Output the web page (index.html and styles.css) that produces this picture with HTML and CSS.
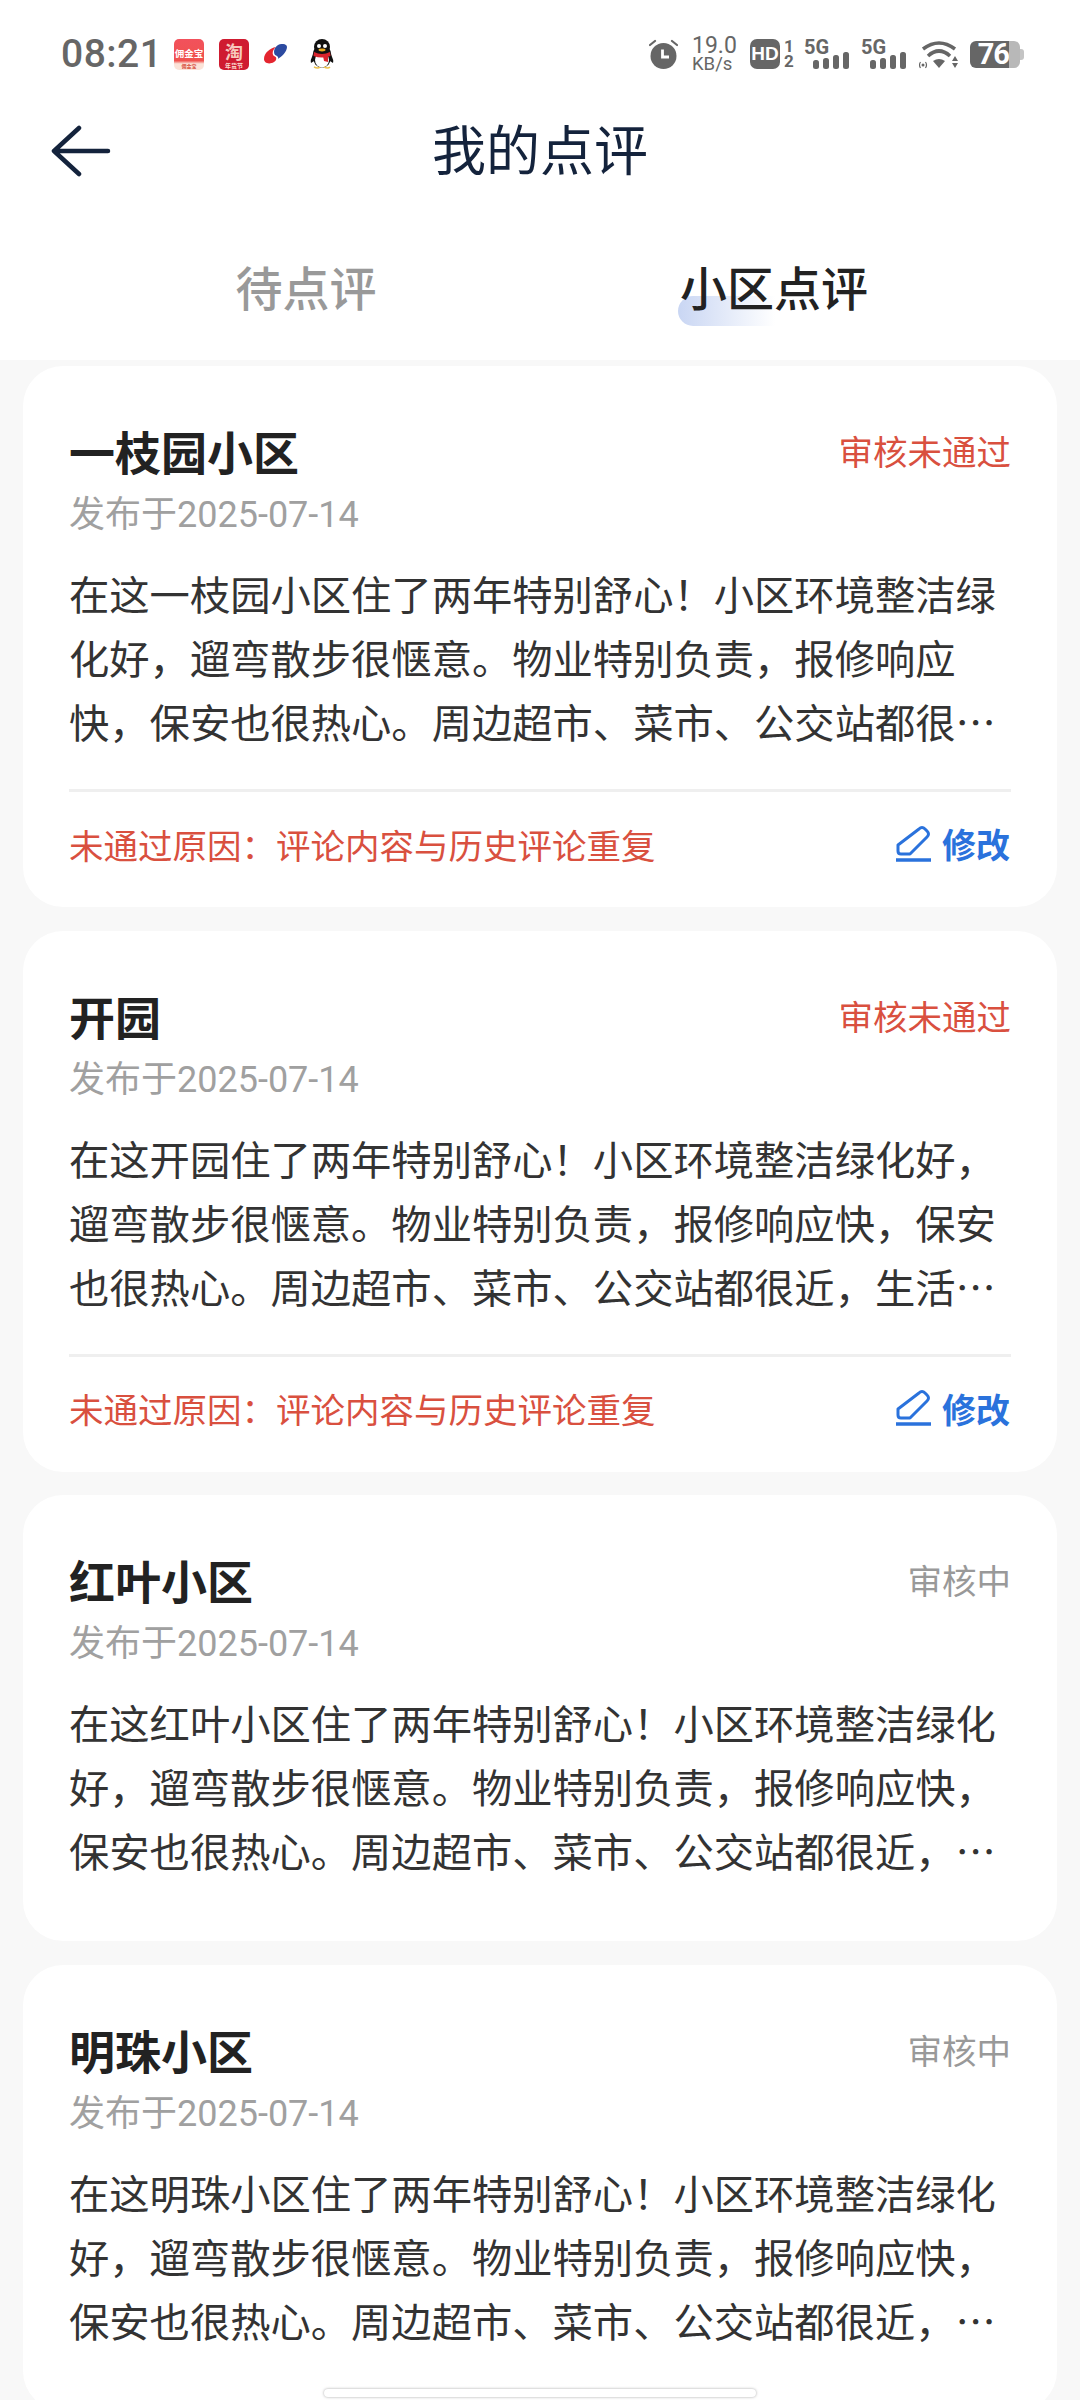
FILE: index.html
```html
<!DOCTYPE html>
<html lang="zh-CN">
<head>
    <meta charset="UTF-8">
    <meta name="viewport" content="width=device-width, initial-scale=1.0">
    <title>我的点评</title>
    <link rel="stylesheet" href="styles.css">
</head>
<body>
    <div class="status-bar">
        <span class="time">08:21</span>
        <svg class="app-icon" width="30" height="31" viewBox="0 0 30 31">
            <defs><linearGradient id="yjb" x1="0" y1="0" x2="0" y2="1"><stop offset="0" stop-color="#f2515c"/><stop offset=".7" stop-color="#f0524e"/><stop offset=".8" stop-color="#fbe3d8"/></linearGradient></defs>
            <rect width="30" height="31" rx="5" fill="url(#yjb)"/>
            <text x="15" y="18" text-anchor="middle" class="app-text" font-size="9.5" fill="#fff">佣金宝</text>
            <text x="15" y="29" text-anchor="middle" class="app-text" font-size="5" fill="#d8503f">佣金宝</text>
        </svg>
        <svg class="app-icon" width="30" height="31" viewBox="0 0 30 31">
            <rect width="30" height="31" rx="5" fill="#cf1b30"/>
            <text x="15" y="20" text-anchor="middle" class="app-text" font-size="18" fill="#f7c9bd">淘</text>
            <text x="15" y="29" text-anchor="middle" class="app-text" font-size="6" fill="#fbdcd0">年货节</text>
        </svg>
        <svg class="app-icon app-icon-wide" width="23" height="20" viewBox="0 0 23 20">
            <path d="M12 3C6 4 0 9 0 15 0 19 5 21 10 18 13 16 13 13 10 12 8 11 8 6 12 3Z" fill="#e4252f"/>
            <path d="M11 11C13 12 15 13 14 15 17 13 23 8 23 3 23 0 18-1 14 1 10 4 9 8 11 11Z" fill="#2c4aa0"/>
        </svg>
        <svg class="app-icon" width="24" height="30" viewBox="0 0 24 30">
            <ellipse cx="12" cy="17" rx="9.5" ry="11.5" fill="#111"/>
            <ellipse cx="12" cy="21" rx="7" ry="7.5" fill="#fff"/>
            <circle cx="12" cy="8" r="8" fill="#111"/>
            <circle cx="9" cy="7" r="2" fill="#fff"/>
            <circle cx="15" cy="7" r="2" fill="#fff"/>
            <ellipse cx="12" cy="11" rx="3.5" ry="1.4" fill="#e9a91f"/>
            <path d="M4 13Q12 17 20 13L20.500 17Q12 20 3.500 17Z" fill="#d9232c"/>
            <path d="M13 17H18V23L14 22Z" fill="#d9232c"/>
            <path d="M4 28Q8 30 10 28M14 28Q18 30 20 28" stroke="#edc14a" stroke-width="1.500" fill="none"/>
            <path d="M3 16Q0 21 1 24L4 22ZM21 16Q24 21 23 24L20 22Z" fill="#111"/>
        </svg>
        <span class="status-right">
            <svg class="alarm" width="29" height="30" viewBox="0 0 29 30">
                <circle cx="14.500" cy="17" r="13" fill="#666"/>
                <path d="M1 6 6 2M28 6 23 2" stroke="#666" stroke-width="2.200" stroke-linecap="round"/>
                <path d="M13.500 10.500V18H20" stroke="#fff" stroke-width="2.800" fill="none"/>
            </svg>
            <span class="speed"><b>19.0</b><i>KB/s</i></span>
            <span class="hd"><span class="hd-box">HD</span><span class="hd-nums"><b>1</b><b>2</b></span></span>
            <span class="signal">
                <span class="signal-label">5G</span>
                <svg width="36" height="17" viewBox="0 0 36 17" fill="#666">
                    <rect x="0" y="8" width="6" height="9" rx="2.500"/><rect x="10" y="6" width="6" height="11" rx="2.500"/><rect x="20" y="3" width="6" height="14" rx="2.500"/><rect x="30" y="0" width="6" height="17" rx="2.500"/>
                </svg>
            </span>
            <span class="signal">
                <span class="signal-label">5G</span>
                <svg width="36" height="17" viewBox="0 0 36 17" fill="#666">
                    <rect x="0" y="8" width="6" height="9" rx="2.500"/><rect x="10" y="6" width="6" height="11" rx="2.500"/><rect x="20" y="3" width="6" height="14" rx="2.500"/><rect x="30" y="0" width="6" height="17" rx="2.500"/>
                </svg>
            </span>
            <svg class="wifi" width="40" height="29" viewBox="0 0 40 29" fill="none" stroke="#666">
                <path d="M4 9Q20 -3 36 9" stroke-width="3.600"/>
                <path d="M9 16Q20 6 31 16" stroke-width="3.600"/>
                <path d="M14 21Q20 17 26 21L20 28Z" fill="#666" stroke="none"/>
                <circle cx="4" cy="25" r="1.500" fill="#666" stroke="none"/>
                <path d="M1.500 22Q-.500 25 1.500 28M6.500 22Q8.500 25 6.500 28" stroke-width="1.200"/>
                <path d="M33 21 36 16 39 21ZM33 23H39L36 28Z" fill="#666" stroke="none"/>
            </svg>
            <span class="battery"><span class="battery-level">76</span><span class="battery-rest"></span><span class="battery-nub"></span></span>
        </span>
    </div>

    <header class="nav">
        <svg class="back" width="60" height="52" viewBox="0 0 60 52" fill="none" stroke="#14233c" stroke-width="4.500" stroke-linecap="round" stroke-linejoin="round">
            <path d="M28 3 3 26 28 49M3 26H57"/>
        </svg>
        <h1>我的点评</h1>
    </header>

    <nav class="tabs">
        <span class="tab">待点评</span>
        <span class="tab tab-active"><span class="tab-mark"></span><span class="tab-text">小区点评</span></span>
    </nav>

    <main class="list">
        <article class="card">
            <div class="card-head">
                <h2>一枝园小区</h2>
                <span class="status status-fail">审核未通过</span>
            </div>
            <p class="date">发布于2025-07-14</p>
            <p class="body">在这一枝园小区住了两年特别舒心！小区环境整洁绿化好，遛弯散步很惬意。物业特别负责，报修响应快，保安也很热心。周边超市、菜市、公交站都很…</p>
            <div class="card-foot">
                <span class="reason">未通过原因：评论内容与历史评论重复</span>
                <span class="edit">
                    <svg width="36" height="38" viewBox="0 0 36 38" fill="none" stroke="#2a72dc" stroke-width="3" stroke-linejoin="round">
                        <path d="M24 4Q27 1 30 4L32 6Q35 9 32 12L15 29H6Q3 29 3 26V20Z"/>
                        <path d="M1 35H36" stroke-width="3.500"/>
                    </svg>
                    修改
                </span>
            </div>
        </article>

        <article class="card">
            <div class="card-head">
                <h2>开园</h2>
                <span class="status status-fail">审核未通过</span>
            </div>
            <p class="date">发布于2025-07-14</p>
            <p class="body">在这开园住了两年特别舒心！小区环境整洁绿化好，遛弯散步很惬意。物业特别负责，报修响应快，保安也很热心。周边超市、菜市、公交站都很近，生活…</p>
            <div class="card-foot">
                <span class="reason">未通过原因：评论内容与历史评论重复</span>
                <span class="edit">
                    <svg width="36" height="38" viewBox="0 0 36 38" fill="none" stroke="#2a72dc" stroke-width="3" stroke-linejoin="round">
                        <path d="M24 4Q27 1 30 4L32 6Q35 9 32 12L15 29H6Q3 29 3 26V20Z"/>
                        <path d="M1 35H36" stroke-width="3.500"/>
                    </svg>
                    修改
                </span>
            </div>
        </article>

        <article class="card">
            <div class="card-head">
                <h2>红叶小区</h2>
                <span class="status">审核中</span>
            </div>
            <p class="date">发布于2025-07-14</p>
            <p class="body">在这红叶小区住了两年特别舒心！小区环境整洁绿化好，遛弯散步很惬意。物业特别负责，报修响应快，保安也很热心。周边超市、菜市、公交站都很近，…</p>
        </article>

        <article class="card">
            <div class="card-head">
                <h2>明珠小区</h2>
                <span class="status">审核中</span>
            </div>
            <p class="date">发布于2025-07-14</p>
            <p class="body">在这明珠小区住了两年特别舒心！小区环境整洁绿化好，遛弯散步很惬意。物业特别负责，报修响应快，保安也很热心。周边超市、菜市、公交站都很近，…</p>
        </article>
    </main>

    <div class="home-bar"></div>
</body>
</html>
```

FILE: styles.css
```css
* {
    box-sizing: border-box;
}
html, body {
    height: 2400px;
}
body {
    margin: 0;
    position: relative;
    overflow: hidden;
    background-color: #f8f8f8;
    font-family: "Noto Sans CJK SC", "Noto Sans", sans-serif;
    color: #222;
}
h1, h2, p {
    margin: 0;
    font-weight: normal;
}

/* status bar */
.status-bar {
    height: 108px;
    padding: 0 56px 0 61px;
    background-color: #fff;
    display: flex;
    align-items: center;
    color: #666;
}
.time {
    font-family: Roboto, sans-serif;
    font-weight: 500;
    font-size: 39px;
    letter-spacing: 0.5px;
    width: 113px;
}
.app-icon {
    margin-right: 15px;
    flex: none;
}
.app-icon-wide {
    margin-right: 23px;
}
.app-text {
    font-family: "Noto Sans CJK SC", sans-serif;
    font-weight: 700;
}
.status-right {
    margin-left: auto;
    display: flex;
    align-items: center;
}
.alarm {
    margin-right: 14px;
}
.speed {
    width: 46px;
    margin-right: 12px;
    display: flex;
    flex-direction: column;
    font-family: Roboto, sans-serif;
}
.speed b {
    font-weight: 400;
    font-size: 23px;
    line-height: 20px;
}
.speed i {
    font-style: normal;
    font-size: 18.500px;
    line-height: 16px;
}
.hd {
    display: flex;
    align-items: center;
    margin-right: 9px;
}
.hd-box {
    width: 30px;
    height: 30px;
    border-radius: 7px;
    background-color: #666;
    color: #fff;
    font-family: "Liberation Sans", sans-serif;
    font-weight: 700;
    font-size: 19px;
    line-height: 30px;
    text-align: center;
}
.hd-nums {
    width: 12px;
    margin-left: 3px;
    display: flex;
    flex-direction: column;
    font-family: Roboto, sans-serif;
    font-size: 17px;
    line-height: 15px;
    text-align: center;
}
.signal {
    width: 45px;
    height: 30px;
    margin-right: 12px;
    position: relative;
}
.signal-label {
    font-family: Roboto, sans-serif;
    font-weight: 700;
    font-size: 20px;
    line-height: 16px;
    display: block;
}
.signal svg {
    position: absolute;
    right: 0;
    bottom: 0;
}
.wifi {
    margin-right: 11px;
    margin-left: 1px;
}
.battery {
    height: 27px;
    display: flex;
    align-items: center;
}
.battery-level {
    width: 39px;
    height: 27px;
    background-color: #666;
    border-radius: 6px 0 0 6px;
    color: #fff;
    font-family: Roboto, sans-serif;
    font-weight: 700;
    font-size: 29px;
    letter-spacing: -1px;
    line-height: 27px;
    text-align: right;
}
.battery-rest {
    width: 11px;
    height: 27px;
    background-color: #b8b8b8;
    border-radius: 0 6px 6px 0;
}
.battery-nub {
    width: 4px;
    height: 11px;
    background-color: #c4c4c4;
    border-radius: 0 3px 3px 0;
}

/* nav + tabs */
.nav {
    height: 88px;
    background-color: #fff;
    position: relative;
    text-align: center;
}
.nav h1 {
    font-size: 54px;
    line-height: 80px;
    color: #14233c;
}
.back {
    position: absolute;
    left: 51px;
    top: 17px;
}
.tabs {
    height: 164px;
    padding: 14px 72px 0;
    background-color: #fff;
    display: grid;
    grid-template-columns: 1fr 1fr;
    align-items: center;
    text-align: center;
    font-size: 47px;
    font-weight: 500;
}
.tab {
    color: #999;
}
.tab-active {
    color: #222;
    position: relative;
}
.tab-text {
    position: relative;
}
.tab-mark {
    position: absolute;
    left: 138px;
    top: 45px;
    width: 97px;
    height: 30px;
    border-radius: 15px 0 0 15px;
    background: linear-gradient(90deg, #c9d6f3, #ffffff);
}

/* cards */
.list {
    padding: 6px 23px 0;
    display: flex;
    flex-direction: column;
    gap: 23.500px;
}
.card {
    background-color: #fff;
    border-radius: 40px;
    padding: 50px 46px 59px;
}
.card-head {
    display: flex;
    justify-content: space-between;
    align-items: center;
}
.card-head h2 {
    font-size: 46px;
    font-weight: 700;
    line-height: 68px;
}
.status {
    font-size: 34.500px;
    color: #999;
}
.status-fail {
    color: #d9503f;
}
.date {
    margin-top: 6px;
    font-family: Roboto, "Noto Sans CJK SC", sans-serif;
    font-size: 36px;
    line-height: 50px;
    color: #a0a0a0;
}
.body {
    margin-top: 21px;
    font-size: 40.300px;
    line-height: 64px;
    color: #333;
}
.card-foot {
    margin: 36px 0 -51px;
    padding-bottom: 4px;
    border-top: 3px solid #efefef;
    height: 110px;
    display: flex;
    justify-content: space-between;
    align-items: center;
}
.reason {
    font-size: 34.500px;
    color: #d9503f;
}
.edit {
    display: flex;
    align-items: center;
    gap: 11px;
    margin-right: 1px;
    font-size: 34px;
    font-weight: 700;
    color: #2a72dc;
}

/* gesture bar */
.home-bar {
    position: absolute;
    left: 324px;
    bottom: 3px;
    width: 432px;
    height: 8px;
    background-color: #fff;
    border-radius: 4px;
    box-shadow: 0 0 3px rgba(0, 0, 0, 0.35);
}
```
